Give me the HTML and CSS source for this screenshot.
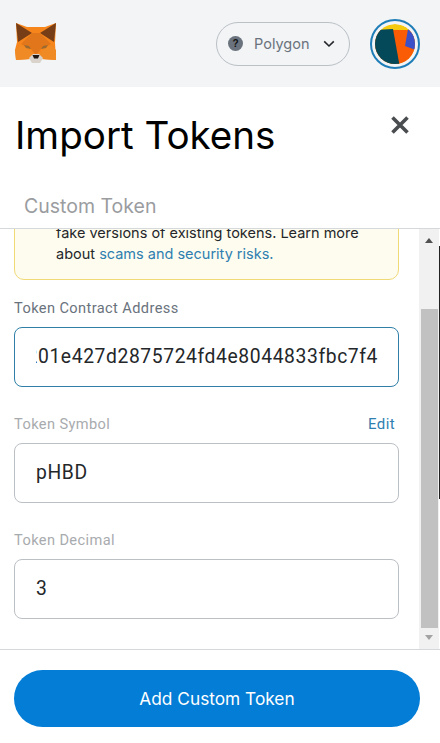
FILE: index.html
```html
<!DOCTYPE html>
<html lang="en">
<head>
<meta charset="utf-8">
<title>Import Tokens</title>
<link rel="stylesheet" href="styles.css">
</head>
<body>
<div class="app">
  <header class="topbar">
    <svg class="fox" viewBox="0 0 42 40" aria-hidden="true">
      <polygon points="1,0 12,4 30,4 41,0 40,20 41,37 27,36 23,40 19,40 15,36 1,37 0,27 2,19" fill="#f6851b"/>
      <polygon points="1,0 17,10 3,19" fill="#763d16"/>
      <polygon points="41,0 25,10 39,19" fill="#763d16"/>
      <polygon points="17,10 25,10 36,21 26,26 21,32 16,26 6,21" fill="#e2761b"/>
      <polygon points="0,27 6,22 15,27 18,32 15,36 1,37" fill="#f08a24"/>
      <polygon points="41,27 36,22 27,27 24,32 27,36 41,37" fill="#f08a24"/>
      <polygon points="9,22 14,23 16,26 11,25" fill="#9a6a30"/>
      <polygon points="33,22 28,23 26,26 31,25" fill="#9a6a30"/>
      <polygon points="14,35 18,31 24,31 28,35 25,40 21,41 17,40" fill="#d9d3cc"/>
      <polygon points="17.5,32 24.5,32 23,35.5 19,35.5" fill="#1f1711"/>
    </svg>
    <div class="network">
      <span class="network-dot">?</span>
      <span class="network-name">Polygon</span>
      <svg class="chevron" viewBox="0 0 12 8" aria-hidden="true"><path d="M1.2 1.4 6 6 10.8 1.4"/></svg>
    </div>
    <div class="avatar">
      <svg viewBox="0 0 40 40" aria-hidden="true">
        <circle cx="20" cy="20" r="20" fill="#f5c90e"/>
        <polygon points="0,6 40,6 40,40 0,40" fill="#fa5c06"/>
        <polygon points="0,6 18,5 25,44 0,44" fill="#03495a"/>
        <polygon points="33,5 42,14 41,26 30,22" fill="#3a50c8"/>
      </svg>
    </div>
  </header>

  <div class="title-row">
    <h1 class="title">Import Tokens</h1>
    <svg class="close" viewBox="0 0 20 20" aria-label="Close"><path d="M2.5 2.5 17.5 17.5M17.5 2.5 2.5 17.5"/></svg>
  </div>
  <div class="tabs"><span class="tab">Custom Token</span></div>

  <div class="scroller">
    <div class="form">
      <div class="notice">
        <p class="notice-text">fake versions of existing tokens. Learn more about <a class="link">scams and security risks.</a></p>
      </div>
      <div class="field field-first">
        <div class="label-row"><label class="label">Token Contract Address</label></div>
        <div class="input input-focus"><div class="clip"><span class="address">0x843a201e427d2875724fd4e8044833fbc7f4</span></div></div>
      </div>
      <div class="field">
        <div class="label-row"><label class="label label-muted">Token Symbol</label><a class="edit">Edit</a></div>
        <div class="input"><span>pHBD</span></div>
      </div>
      <div class="field">
        <div class="label-row"><label class="label label-muted">Token Decimal</label></div>
        <div class="input"><span>3</span></div>
      </div>
    </div>
    <div class="scrollbar">
      <span class="arrow arrow-up"></span>
      <div class="track"><div class="thumb"></div></div>
      <span class="arrow arrow-down"></span>
    </div>
    <span class="edge-line"></span>
  </div>

  <footer class="footer">
    <button class="primary" type="button">Add Custom Token</button>
  </footer>
</div>
</body>
</html>
```
FILE: styles.css
```css
* { box-sizing: border-box; }
html, body { margin: 0; height: 100%; background: #fff; overflow: hidden; }
body { font-family: Inter, "Liberation Sans", sans-serif; color: #24272a; }
.app { width: 440px; height: 743px; display: flex; flex-direction: column; }

.topbar { height: 87px; flex: none; background: #f2f4f6; display: flex; align-items: center; padding: 0 20px 0 15px; }
.fox { width: 42px; height: 40px; flex: none; margin-top: -1px; }
.network { margin-left: auto; width: 134px; height: 44px; border: 1px solid #bbc0c5; border-radius: 22px; display: flex; align-items: center; padding: 0 14px 0 11px; }
.network-dot { width: 15px; height: 15px; border-radius: 50%; background: #6a737d; color: #111; font: 700 10px/15px "Liberation Sans", sans-serif; text-align: center; }
.network-name { margin-left: 11px; font-size: 14.5px; color: #6a737d; }
.chevron { width: 12px; height: 8px; margin-left: auto; fill: none; stroke: #24272a; stroke-width: 1.6; }
.avatar { margin-left: 20px; width: 50px; height: 50px; border: 2px solid #1f7db8; border-radius: 50%; padding: 3px; flex: none; }
.avatar svg { display: block; width: 100%; height: 100%; border-radius: 50%; }

.title-row { height: 96px; flex: none; display: flex; justify-content: space-between; padding: 24px 30px 0 15px; }
.title { margin: 0; font-size: 38.6px; line-height: 48px; font-weight: 400; color: #000; }
.close { width: 20px; height: 20px; margin-top: 4px; fill: none; stroke: #4a4d50; stroke-width: 3.6; }

.tabs { height: 46px; flex: none; padding: 11px 0 0 24px; border-bottom: 1px solid #d6d9dc; }
.tab { font-size: 19.5px; line-height: 24px; color: #9a9ca0; display: block; }

.scroller { flex: 1; min-height: 0; display: flex; overflow: hidden; border-bottom: 1px solid #d6d9dc; position: relative; }
.form { flex: 1; min-width: 0; padding: 0 20px 0 14px; }
.notice { margin-top: -10px; height: 61px; padding: 2px 16px 0 41px; background: #fefcef; border: 1px solid #f0d977; border-radius: 10px; }
.notice-text { margin: 0; font-size: 14.5px; line-height: 21px; color: #24272a; }
.link { color: #2f7fb0; }

.field { margin-top: 26px; }
.field-first { margin-top: 17px; }
.label-row { display: flex; justify-content: space-between; height: 22px; padding-right: 4px; margin-bottom: 8px; align-items: center; }
.label { font: 400 14.6px/20px Roboto, sans-serif; letter-spacing: .4px; color: #6a737d; }
.label-muted { color: #a8abae; }
.edit { font: 400 15px/20px Roboto, sans-serif; letter-spacing: .4px; color: #2f7fb0; }
.input { height: 60px; border: 1px solid #bbc0c5; border-radius: 8px; padding: 0 20px 0 21px; display: flex; align-items: center; font: 400 19.3px/24px Roboto, sans-serif; letter-spacing: .6px; color: #24272a; white-space: nowrap; }
.input-focus { border-color: #2f7fa8; }
.clip { flex: 1; min-width: 0; overflow: hidden; display: flex; justify-content: flex-end; }
.address { flex: none; }

.scrollbar { width: 20px; flex: none; background: #f1f1f1; display: flex; flex-direction: column; align-items: center; margin-right: 1px; }
.arrow { flex: none; width: 0; height: 0; border-left: 4.5px solid transparent; border-right: 4.5px solid transparent; }
.arrow-up { margin: 9px 0 5px; border-bottom: 5px solid #505050; }
.arrow-down { margin: 7px 0 9px; border-top: 5px solid #a3a3a3; }
.track { flex: 1; width: 100%; display: flex; flex-direction: column; justify-content: flex-end; padding: 0 1px 0 2px; }
.thumb { height: 319px; background: #c1c1c1; }
.edge-line { position: absolute; right: 0; top: 17px; width: 1px; height: 253px; background: #222; }

.footer { height: 93px; flex: none; padding: 20px 20px 0 14px; }
.primary { display: block; width: 100%; height: 57px; border: 0; border-radius: 29px; background: #037dd6; color: #fff; font: 400 17.3px/24px Inter, sans-serif; }
```
